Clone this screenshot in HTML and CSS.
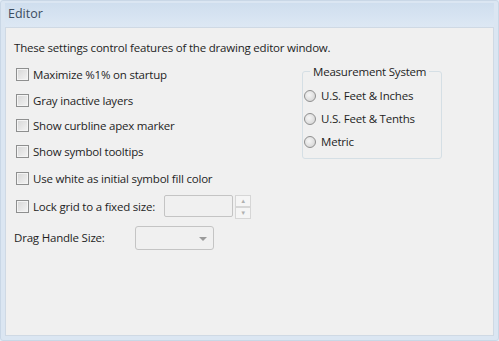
FILE: index.html
```html
<!DOCTYPE html>
<html lang="en">
<head>
	<meta charset="UTF-8">
	<title>Editor</title>
	<link rel="stylesheet" href="styles.css">
</head>
<body>
	<div class="frame">
		<div class="title">Editor</div>
		<div class="panel">
			<p class="intro">These settings control features of the drawing editor window.</p>
			<div class="cols">
				<div class="opts">
					<label class="chk"><span class="box"></span>Maximize %1% on startup</label>
					<label class="chk"><span class="box"></span>Gray inactive layers</label>
					<label class="chk"><span class="box"></span>Show curbline apex marker</label>
					<label class="chk pre"><span class="box"></span>Show symbol tooltips</label>
					<label class="chk gap"><span class="box"></span>Use white as initial symbol fill color</label>
					<div class="chk grid">
						<span class="box"></span>Lock grid to a fixed size:
						<span class="num"></span>
						<span class="spin"><i>&#9650;</i><i>&#9660;</i></span>
					</div>
					<div class="drag">
						<span class="lbl">Drag Handle Size:</span>
						<span class="combo"><b></b></span>
					</div>
				</div>
				<fieldset class="group">
					<legend>Measurement System</legend>
					<label class="rad"><span class="dot"></span>U.S. Feet &amp; Inches</label>
					<label class="rad"><span class="dot"></span>U.S. Feet &amp; Tenths</label>
					<label class="rad"><span class="dot"></span>Metric</label>
				</fieldset>
			</div>
		</div>
	</div>
</body>
</html>
```
FILE: styles.css
```css
*{margin:0;padding:0;box-sizing:border-box;}
body{width:499px;height:341px;background:#e4edf7;font-family:"Open Sans","Noto Sans",sans-serif;font-size:11.5px;letter-spacing:-0.2px;color:#1e1e1e;overflow:hidden;}
.frame{width:499px;height:341px;padding:2px 4px 4px 4px;background:#dbe6f2;border:1px solid #c9d7e6;border-radius:3px;}
.title{height:24px;line-height:22px;padding-left:3px;font-size:12.5px;letter-spacing:0;color:#3c4d60;background:linear-gradient(#cfdeee,#dde8f4);}
.panel{height:309px;background:#f0f0f0;border:1px solid #cfd9e4;padding:12px 0 0 8px;}
.intro{line-height:16px;}
.cols{display:flex;margin-top:10px;}
.opts{width:290px;}
.chk{display:flex;align-items:center;height:17px;margin-bottom:8.5px;padding-left:2px;}
.chk.pre{margin-bottom:10.5px;}
.chk.gap{margin-bottom:8px;}
.box{width:13px;height:13px;margin-right:4px;border:1px solid #8e8f8f;background:linear-gradient(135deg,#d6d6d6,#f4f4f4);box-shadow:inset 0 0 0 1px #f4f4f4;}
.grid{height:22px;}
.num{width:69px;height:22px;margin-left:9px;border:1px solid #c4c4c4;background:#f0f0f0;border-radius:2px;}
.spin{display:flex;flex-direction:column;width:16px;height:22px;margin-left:2px;}
.spin i{flex:1;font-style:normal;font-size:6px;color:#b0b0b0;text-align:center;line-height:10px;border:1px solid #d6d6d6;background:#f5f5f5;}
.drag{display:flex;align-items:center;margin-top:4px;}
.lbl{width:121px;}
.combo{position:relative;width:79px;height:24px;border:1px solid #c4c4c4;border-radius:3px;background:#f0f0f0;}
.combo b{position:absolute;right:6px;top:10px;border:4px solid transparent;border-top:4px solid #9a9a9a;border-bottom:0;}
.group{width:140px;height:95px;margin-left:-2px;margin-top:-2px;border:1px solid #d5dfe5;border-radius:3px;padding:8px 0 0 1px;}
.group legend{padding:0 3px;margin-left:6px;}
.rad{display:flex;align-items:center;height:17px;margin-bottom:6px;}
.dot{width:12px;height:12px;margin-right:5px;border-radius:50%;border:1px solid #8f8f8f;background:radial-gradient(circle at 40% 40%,#f6f6f6,#cfcfcf);}
```
